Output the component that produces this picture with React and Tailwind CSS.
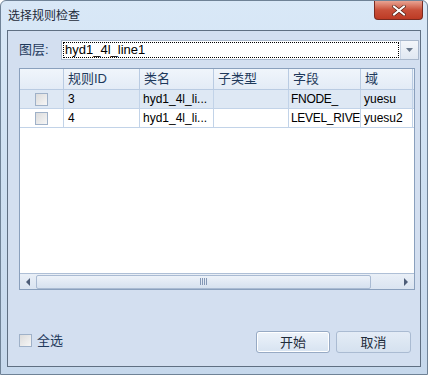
import React from "react";

const font = { fontFamily: '"Liberation Sans", "Noto Sans CJK SC", sans-serif' };

function Box({ className = "" }) {
  return (
    <span
      className={`inline-block w-[13px] h-[13px] border border-[#9fb1c8] bg-gradient-to-br from-[#dcdcdc] to-[#f6f6f6] ${className}`}
    />
  );
}

const cols = [
  { w: "w-[44px]", label: "" },
  { w: "w-[76px]", label: "规则ID" },
  { w: "w-[74px]", label: "类名" },
  { w: "w-[75px]", label: "子类型" },
  { w: "w-[72px]", label: "字段" },
  { w: "w-[52px]", label: "域" },
];

const rows = [
  { id: "3", cls: "hyd1_4l_li...", sub: "", field: "FNODE_", dom: "yuesu", bg: "bg-[#dee8f4]" },
  { id: "4", cls: "hyd1_4l_li...", sub: "", field: "LEVEL_RIVE", dom: "yuesu2", bg: "bg-white" },
];

export default function App() {
  return (
    <div
      className="w-[428px] h-[375px] rounded-t-[6px] border border-[#6f8296] bg-gradient-to-b from-[#d9e8f7] via-[#cddff1] to-[#c6d8ec] flex flex-col text-[12px] text-black overflow-hidden"
      style={font}
    >
      {/* title bar */}
      <div className="h-[29px] flex items-start justify-between pl-[7px] pr-[4px]">
        <div className="pt-[6px] text-[12px] text-[#1e2b3a]">选择规则检查</div>
        <button className="w-[49px] h-[19px] rounded-b-[4px] border border-t-0 border-[#7a2a20] bg-gradient-to-b from-[#e8a393] via-[#c9503a] to-[#bd3a24] flex items-center justify-center">
          <svg width="14" height="11" viewBox="0 0 14 11">
            <path d="M2 1.5 L12 9.5 M12 1.5 L2 9.5" stroke="#4a1a10" strokeWidth="3.4" strokeLinecap="square" />
            <path d="M2 1.5 L12 9.5 M12 1.5 L2 9.5" stroke="#ffffff" strokeWidth="2" strokeLinecap="square" />
          </svg>
        </button>
      </div>

      {/* client area */}
      <div className="mx-[6px] mb-[7px] flex-1 border border-[#5f6f82] bg-[#d3dff0] flex flex-col pl-[11px] pr-[1px] pt-[9px]">
        {/* layer row */}
        <div className="flex items-center h-[20px]">
          <div className="w-[42px] text-[#1e395b] text-[13px]">图层:</div>
          <div className="flex-1 h-[20px] border border-[#a9b8cc] bg-white flex items-stretch">
            <div className="flex-1 m-[1px] border border-dotted border-black flex items-center pl-[1px] text-[13px] text-[#000]">
              hyd1_4l_line1
            </div>
            <div className="w-[18px] border-l border-[#c8d4e4] bg-gradient-to-b from-[#f3f6fa] to-[#e0e8f2] flex items-center justify-center">
              <svg width="7" height="4" viewBox="0 0 7 4">
                <path d="M0 0 H7 L3.5 4 Z" fill="#6b7a8e" />
              </svg>
            </div>
          </div>
        </div>

        {/* table */}
        <div className="mt-[8px] mr-[4px] h-[222px] border border-[#8aa0bd] bg-white flex flex-col">
          <div className="flex h-[21px] bg-gradient-to-b from-[#f0f5fb] to-[#e3ebf6] border-b border-[#b9cbe2]">
            {cols.map((c, i) => (
              <div
                key={i}
                className={`${c.w} shrink-0 border-r border-[#b9cbe2] flex items-center pl-[4px] text-[#1e395b] text-[13px]`}
              >
                {c.label}
              </div>
            ))}
          </div>
          {rows.map((r, i) => (
            <div key={i} className={`flex h-[19px] ${r.bg} border-b border-[#c2d3e8] whitespace-nowrap`}>
              <div className="w-[44px] shrink-0 border-r border-[#c2d3e8] flex items-center justify-center">
                <Box />
              </div>
              <div className="w-[76px] shrink-0 border-r border-[#c2d3e8] flex items-center pl-[4px] text-[#000]">{r.id}</div>
              <div className="w-[74px] shrink-0 border-r border-[#c2d3e8] flex items-center pl-[3px] overflow-hidden">{r.cls}</div>
              <div className="w-[75px] shrink-0 border-r border-[#c2d3e8] flex items-center pl-[3px]">{r.sub}</div>
              <div className="w-[72px] shrink-0 border-r border-[#c2d3e8] flex items-center pl-[2px] overflow-hidden tracking-[-0.3px]">{r.field}</div>
              <div className="w-[52px] shrink-0 border-r border-[#c2d3e8] flex items-center pl-[3px] overflow-hidden">{r.dom}</div>
            </div>
          ))}
          <div className="flex-1" />
          {/* horizontal scrollbar */}
          <div className="h-[16px] border-t border-[#aebfd6] bg-gradient-to-b from-[#e9eff7] to-[#dae4f1] flex items-center">
            <div className="w-[16px] flex items-center justify-center">
              <svg width="4" height="8" viewBox="0 0 4 8">
                <path d="M4 0 V8 L0 4 Z" fill="#4d5d78" />
              </svg>
            </div>
            <div className="w-[335px] h-[14px] rounded-[2px] border border-[#a9bad2] bg-gradient-to-b from-[#edf2f9] to-[#d6e1ef] flex items-center justify-center">
              <svg width="7" height="7" viewBox="0 0 7 7">
                <path d="M0.5 0 V7 M2.5 0 V7 M4.5 0 V7 M6.5 0 V7" stroke="#8497b5" strokeWidth="1" />
              </svg>
            </div>
            <div className="flex-1" />
            <div className="w-[16px] flex items-center justify-center">
              <svg width="4" height="8" viewBox="0 0 4 8">
                <path d="M0 0 V8 L4 4 Z" fill="#4d5d78" />
              </svg>
            </div>
          </div>
        </div>

        <div className="flex-1" />

        {/* bottom */}
        <div className="flex items-center mb-[12px] pr-[8px]">
          <div className="flex items-center gap-[5px] pb-[4px]">
            <Box />
            <span className="text-[#1e395b] text-[13px]">全选</span>
          </div>
          <div className="flex-1" />
          <button className="w-[74px] h-[22px] rounded-[3px] border border-[#97aac4] bg-gradient-to-b from-[#edf3fa] to-[#d7e3f1] shadow-[inset_0_0_0_1px_#ffffff] text-[13px] text-[#1e2b3a]">
            开始
          </button>
          <button className="ml-[6px] w-[75px] h-[22px] rounded-[3px] border border-[#aabbd2] bg-gradient-to-b from-[#e4ecf6] to-[#d5e1ef] text-[13px] text-[#1e2b3a]">
            取消
          </button>
        </div>
      </div>
    </div>
  );
}
